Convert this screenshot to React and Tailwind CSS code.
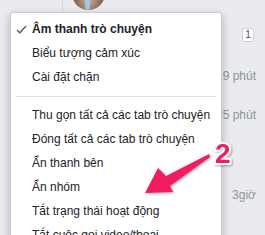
import React from "react";

const items = [
  ["Âm thanh trò chuyện", true],
  ["Biểu tượng cảm xúc"],
  ["Cài đặt chặn"],
];

const moreItems = [
  "Thu gọn tất cả các tab trò chuyện",
  "Đóng tất cả các tab trò chuyện",
  "Ẩn thanh bên",
  "Ẩn nhóm",
  "Tắt trạng thái hoạt động",
  "Tắt cuộc gọi video/thoại",
];

function Check() {
  return (
    <svg width="11" height="9" viewBox="0 0 11 9" className="absolute left-[5px] top-[8px]">
      <path d="M1 5 L3.8 7.8 L10 1" fill="none" stroke="#606770" strokeWidth="1.5" />
    </svg>
  );
}

function Menu() {
  return (
    <div className="absolute left-[10px] top-[12px] w-[212px] h-[240px] bg-white border border-[#c9ccd1] rounded-[3px] shadow-[0_3px_8px_rgba(0,0,0,0.25)] pt-[4px]">
      {items.map(([label, bold]) => (
        <div key={label} className="relative h-6 flex items-center pl-[21px] text-[12px] text-[#1d2129]">
          {bold && <Check />}
          <span className={bold ? "font-bold" : ""}>{label}</span>
        </div>
      ))}
      <div className="mt-[7px] mb-[6px] mx-[5px] border-t border-[#dddfe2]" />
      {moreItems.map((label) => (
        <div key={label} className="h-6 flex items-center pl-[21px] text-[12px] text-[#1d2129] whitespace-nowrap">
          {label}
        </div>
      ))}
    </div>
  );
}

function Annotation() {
  return (
    <svg width="265" height="235" viewBox="0 0 265 235" className="absolute left-0 top-0 pointer-events-none">
      <defs>
        <filter id="sh" x="-20%" y="-20%" width="140%" height="140%">
          <feDropShadow dx="1" dy="1" stdDeviation="1" floodColor="#000" floodOpacity="0.35" />
        </filter>
      </defs>
      <polygon
        points="209,154 166,176 158,168 145,193 173,192 170,186 210,157"
        fill="#f31d5e"
        filter="url(#sh)"
      />
      <text
        x="215"
        y="163"
        fontFamily="'Liberation Sans', Arial, sans-serif"
        fontWeight="700"
        fontSize="28"
        fill="#f31d5e"
        stroke="#fff"
        strokeWidth="4"
        strokeLinejoin="round"
        paintOrder="stroke"
        filter="url(#sh)"
      >
        2
      </text>
    </svg>
  );
}

export default function App() {
  return (
    <div className="relative w-[265px] h-[235px] overflow-hidden bg-[#e9ebee] font-['Liberation_Sans',Arial,sans-serif]">
      <div className="flex h-full">
        <div className="w-[63px] shrink-0 border-r border-[#d3d6db]" />
        <div className="flex-1">
          <div className="ml-[9px] mt-[-23px] w-[33px] h-[33px] rounded-full bg-[radial-gradient(circle_at_50%_70%,#c9b6a4_0%,#8a6552_45%,#5a3d31_100%)] relative overflow-hidden">
            <div className="absolute left-[13px] top-[14px] w-[5px] h-[19px] bg-[#9fc7e6] rounded-sm" />
          </div>
        </div>
        <div className="flex flex-col items-end pr-[9px] text-[12px] leading-4 text-[#90949c]">
          <div className="mt-[28px] mr-[2px] w-[12px] h-[14px] bg-white border border-[#ccd0d5] rounded-[2px] flex items-center justify-center text-[10px] text-[#4b4f56]">
            1
          </div>
          <div className="mt-[26px] whitespace-nowrap">19 phút</div>
          <div className="mt-[23px] whitespace-nowrap">35 phút</div>
          <div className="mt-[64px] whitespace-nowrap">3giờ</div>
        </div>
      </div>
      <Menu />
      <Annotation />
    </div>
  );
}
